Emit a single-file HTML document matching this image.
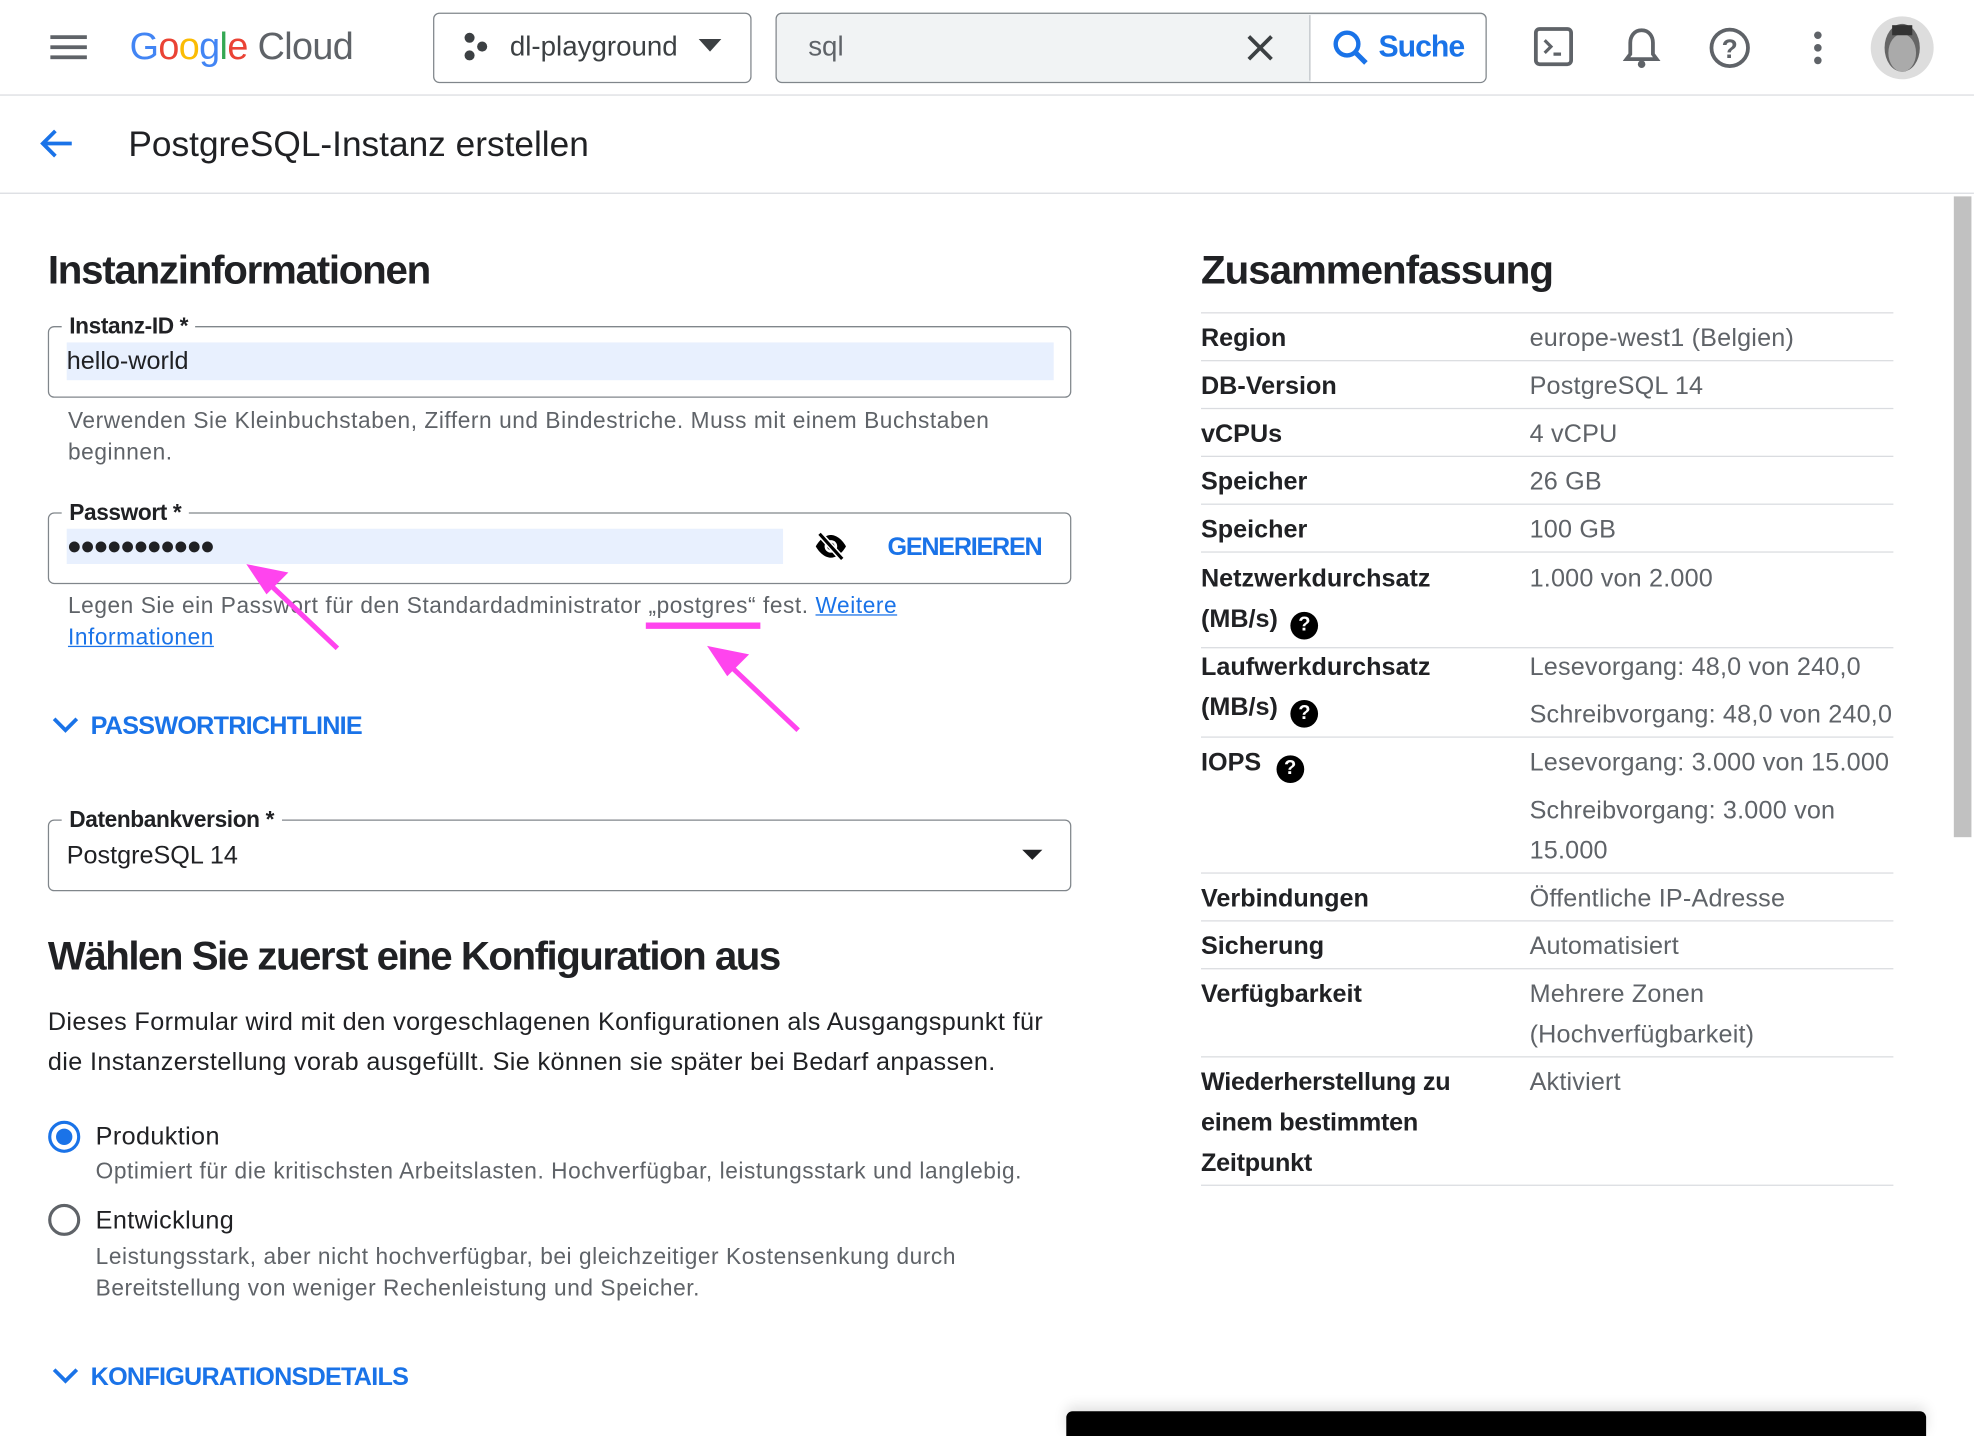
<!DOCTYPE html>
<html><head><meta charset="utf-8"><style>
*{margin:0;padding:0;box-sizing:border-box}
html,body{width:1974px;height:1428px;overflow:hidden;background:#fff}
#w{position:absolute;left:0;top:0;width:1568px;height:1134px;transform:scale(1.2589);transform-origin:0 0;font-family:"Liberation Sans",sans-serif;color:#202124}
.a{position:absolute;white-space:nowrap}
.box{position:absolute;border:1.5px solid #80868b;border-radius:5px}
.lbl{position:absolute;background:#fff;padding:0 6px;font-size:18px;font-weight:bold;left:10px;top:-13px;line-height:24px;letter-spacing:-0.3px}
.help{font-size:18px;color:#5f6368;letter-spacing:0.45px}
.blue{color:#1a73e8}
.l{font-size:20px;font-weight:bold;color:#202124}
.v{font-size:20px;color:#5f6368;letter-spacing:0.15px}
.hr{position:absolute;left:954px;width:550px;height:1px;background:#dadce0}
.q{display:inline-block;width:22px;height:22px;border-radius:50%;background:#000;color:#fff;font-size:16px;text-align:center;line-height:22px;font-weight:bold;vertical-align:-3px;margin-left:10px;letter-spacing:0}
</style></head><body><div id="w">
<!-- header -->
<div class="a" style="left:40px;top:28px;width:29px;height:3px;background:#5f6368;box-shadow:0 8px 0 #5f6368,0 16px 0 #5f6368"></div>
<div class="a" style="left:103px;top:21px;font-size:30px;letter-spacing:-0.5px"><span style="color:#4285f4">G</span><span style="color:#ea4335">o</span><span style="color:#fbbc04">o</span><span style="color:#4285f4">g</span><span style="color:#34a853">l</span><span style="color:#ea4335">e</span> <span style="color:#5f6368">Cloud</span></div>
<div class="box" style="left:344px;top:10px;width:253px;height:56px"></div>
<svg class="a" style="left:366px;top:25px" width="24" height="24"><circle cx="7" cy="5" r="4" fill="#3c4043"/><circle cx="17" cy="12" r="4" fill="#3c4043"/><circle cx="7" cy="19" r="4" fill="#3c4043"/></svg>
<div class="a" style="left:405px;top:24px;font-size:22px;color:#3c4043">dl-playground</div>
<svg class="a" style="left:554px;top:30px" width="20" height="12"><path d="M1 1h18L10 11z" fill="#3c4043"/></svg>
<div class="a" style="left:616px;top:10px;width:565px;height:56px;background:#f1f3f4;border:1.5px solid #80868b;border-radius:5px"></div>
<div class="a" style="left:1040px;top:12px;width:1px;height:52px;background:#bdc1c6"></div>
<div class="a" style="left:1041px;top:11.5px;width:139px;height:53px;background:#fff;border-radius:0 4px 4px 0"></div>
<div class="a" style="left:642px;top:24px;font-size:22px;color:#5f6368">sql</div>
<svg class="a" style="left:990px;top:27px" width="22" height="22"><path d="M2 2L20 20M20 2L2 20" stroke="#3c4043" stroke-width="3"/></svg>
<svg class="a" style="left:1058px;top:23px" width="30" height="30"><circle cx="12" cy="12" r="9" fill="none" stroke="#1a73e8" stroke-width="3.5"/><path d="M18 18L27 27" stroke="#1a73e8" stroke-width="4"/></svg>
<div class="a" style="left:1095px;top:24px;font-size:24px;font-weight:bold;color:#1a73e8;letter-spacing:-0.8px">Suche</div>
<svg class="a" style="left:1218px;top:21px" width="32" height="32"><rect x="2" y="2" width="28" height="28" rx="3" fill="none" stroke="#5f6368" stroke-width="3"/><path d="M9 11l5 5-5 5M16 22h6" stroke="#5f6368" stroke-width="2.5" fill="none"/></svg>
<svg class="a" style="left:1289px;top:20px" width="30" height="36"><path d="M15 4c-6 0-9 5-9 10v9l-3 4h24l-3-4v-9c0-5-3-10-9-10z" fill="none" stroke="#5f6368" stroke-width="3"/><circle cx="15" cy="31" r="3" fill="#5f6368"/></svg>
<svg class="a" style="left:1357px;top:21px" width="34" height="34"><circle cx="17" cy="17" r="14.5" fill="none" stroke="#5f6368" stroke-width="3"/><text x="17" y="25" font-size="21" font-weight="bold" fill="#5f6368" text-anchor="middle" font-family="Liberation Sans">?</text></svg>
<svg class="a" style="left:1438px;top:24px" width="12" height="28"><circle cx="6" cy="4" r="3" fill="#5f6368"/><circle cx="6" cy="14" r="3" fill="#5f6368"/><circle cx="6" cy="24" r="3" fill="#5f6368"/></svg>
<svg class="a" style="left:1485px;top:12px" width="52" height="52"><circle cx="26" cy="26" r="25" fill="#ddd"/><ellipse cx="26" cy="26" rx="14" ry="19" fill="#666"/><ellipse cx="26" cy="30" rx="11" ry="15" fill="#aaa"/><rect x="18" y="8" width="16" height="8" fill="#333"/></svg>
<div class="a" style="left:0;top:75px;width:1568px;height:1px;background:#dadce0"></div>
<svg class="a" style="left:30px;top:101px" width="30" height="26"><path d="M27 13H5M14 3L4 13l10 10" stroke="#1a73e8" stroke-width="3" fill="none"/></svg>
<div class="a" style="left:102px;top:99px;font-size:28px">PostgreSQL-Instanz erstellen</div>
<div class="a" style="left:0;top:153px;width:1568px;height:1px;background:#dadce0"></div>
<div class="a" style="left:1552px;top:156px;width:14px;height:509px;background:#c1c1c1"></div>
<!-- left -->
<div class="a" style="left:38px;top:196px;font-size:32px;font-weight:bold;letter-spacing:-1px">Instanzinformationen</div>
<div class="box" style="left:38px;top:259px;width:813px;height:57px"><div class="lbl">Instanz-ID *</div>
<div class="a" style="left:14px;top:12px;width:784px;height:30px;background:#e8f0fe"></div>
<div class="a" style="left:14px;top:16px;font-size:20px">hello-world</div></div>
<div class="a help" style="left:54px;top:322px;line-height:25px;white-space:normal;width:790px">Verwenden Sie Kleinbuchstaben, Ziffern und Bindestriche. Muss mit einem Buchstaben beginnen.</div>
<div class="box" style="left:38px;top:407px;width:813px;height:57px"><div class="lbl">Passwort *</div>
<div class="a" style="left:14px;top:12px;width:569px;height:28px;background:#e8f0fe"></div>
<div class="a" style="left:14px;top:15px;font-size:20px;letter-spacing:-1.5px">●●●●●●●●●●●</div>
<svg class="a" style="left:607px;top:14px" width="28" height="24"><path d="M2 12c4-7 9-9 12-9s8 2 12 9c-4 7-9 9-12 9s-8-2-12-9z" fill="#000"/><circle cx="14" cy="12" r="5" fill="#fff"/><circle cx="14" cy="12" r="3" fill="#000"/><path d="M5 2L23 22" stroke="#fff" stroke-width="5"/><path d="M5 2L23 22" stroke="#000" stroke-width="2.5"/></svg>
<div class="a blue" style="left:666px;top:16px;font-size:20px;font-weight:bold;letter-spacing:-1px">GENERIEREN</div></div>
<div class="a help" style="left:54px;top:469px;line-height:25px">Legen Sie ein Passwort für den Standardadministrator „postgres“ fest. <span class="blue" style="text-decoration:underline">Weitere</span></div>
<div class="a help blue" style="left:54px;top:494px;line-height:25px;color:#1a73e8;text-decoration:underline">Informationen</div>
<svg class="a" style="left:0;top:0" width="700" height="600"><g stroke="#ff44ee" stroke-width="4" fill="#ff44ee"><path d="M268 515L212 462"/><path d="M200 451l25 5-13 13z"/><path d="M513 497h91" stroke-width="5"/><path d="M634 580L578 527"/><path d="M566 516l25 5-13 13z"/></g></svg>
<svg class="a" style="left:41px;top:568px" width="22" height="16"><path d="M2 3l9 9 9-9" stroke="#1a73e8" stroke-width="3" fill="none"/></svg>
<div class="a blue" style="left:72px;top:566px;font-size:20px;font-weight:bold;letter-spacing:-0.6px">PASSWORTRICHTLINIE</div>
<div class="box" style="left:38px;top:651px;width:813px;height:57px"><div class="lbl">Datenbankversion *</div>
<div class="a" style="left:14px;top:17px;font-size:20px">PostgreSQL 14</div>
<svg class="a" style="left:772px;top:22px" width="18" height="10"><path d="M1 1h16L9 9z" fill="#202124"/></svg></div>
<div class="a" style="left:38px;top:741px;font-size:32px;font-weight:bold;letter-spacing:-1.2px">Wählen Sie zuerst eine Konfiguration aus</div>
<div class="a" style="left:38px;top:796px;font-size:20px;line-height:32px;letter-spacing:0.3px">Dieses Formular wird mit den vorgeschlagenen Konfigurationen als Ausgangspunkt für<br>die Instanzerstellung vorab ausgefüllt. Sie können sie später bei Bedarf anpassen.</div>
<svg class="a" style="left:37px;top:889px" width="28" height="28"><circle cx="14" cy="14" r="11.5" fill="none" stroke="#1a73e8" stroke-width="2.5"/><circle cx="14" cy="14" r="6.5" fill="#1a73e8"/></svg>
<div class="a" style="left:76px;top:892px;font-size:20px;letter-spacing:0.3px">Produktion</div>
<div class="a help" style="left:76px;top:920px">Optimiert für die kritischsten Arbeitslasten. Hochverfügbar, leistungsstark und langlebig.</div>
<svg class="a" style="left:37px;top:955px" width="28" height="28"><circle cx="14" cy="14" r="11.5" fill="none" stroke="#5f6368" stroke-width="2.5"/></svg>
<div class="a" style="left:76px;top:959px;font-size:20px;letter-spacing:0.3px">Entwicklung</div>
<div class="a help" style="left:76px;top:986px;line-height:25px">Leistungsstark, aber nicht hochverfügbar, bei gleichzeitiger Kostensenkung durch<br>Bereitstellung von weniger Rechenleistung und Speicher.</div>
<svg class="a" style="left:41px;top:1085px" width="22" height="16"><path d="M2 3l9 9 9-9" stroke="#1a73e8" stroke-width="3" fill="none"/></svg>
<div class="a blue" style="left:72px;top:1083px;font-size:20px;font-weight:bold;letter-spacing:-0.6px">KONFIGURATIONSDETAILS</div>
<div class="a" style="left:847px;top:1121px;width:683px;height:20px;background:#000;border-radius:5px 5px 0 0;box-shadow:0 -4px 10px rgba(0,0,0,.12)"></div>
<!-- right -->
<div class="a" style="left:954px;top:196px;font-size:32px;font-weight:bold;letter-spacing:-0.8px">Zusammenfassung</div>
<div class="hr" style="top:248px"></div>
<div class="a l" style="left:954px;top:258px">Region</div><div class="a v" style="left:1215px;top:258px">europe-west1 (Belgien)</div>
<div class="hr" style="top:286px"></div>
<div class="a l" style="left:954px;top:296px">DB-Version</div><div class="a v" style="left:1215px;top:296px">PostgreSQL 14</div>
<div class="hr" style="top:324px"></div>
<div class="a l" style="left:954px;top:334px">vCPUs</div><div class="a v" style="left:1215px;top:334px">4 vCPU</div>
<div class="hr" style="top:362px"></div>
<div class="a l" style="left:954px;top:372px">Speicher</div><div class="a v" style="left:1215px;top:372px">26 GB</div>
<div class="hr" style="top:400px"></div>
<div class="a l" style="left:954px;top:410px">Speicher</div><div class="a v" style="left:1215px;top:410px">100 GB</div>
<div class="hr" style="top:438px"></div>
<div class="a l" style="left:954px;top:444px;line-height:32px">Netzwerkdurchsatz<br>(MB/s)<span class="q">?</span></div><div class="a v" style="left:1215px;top:449px">1.000 von 2.000</div>
<div class="hr" style="top:514px"></div>
<div class="a l" style="left:954px;top:514px;line-height:32px">Laufwerkdurchsatz<br>(MB/s)<span class="q">?</span></div><div class="a v" style="left:1215px;top:511px;line-height:38px">Lesevorgang: 48,0 von 240,0<br>Schreibvorgang: 48,0 von 240,0</div>
<div class="hr" style="top:585px"></div>
<div class="a l" style="left:954px;top:595px">IOPS<span class="q" style="margin-left:12px">?</span></div><div class="a v" style="left:1215px;top:587px;line-height:38px">Lesevorgang: 3.000 von 15.000<br>Schreibvorgang: 3.000 von</div><div class="a v" style="left:1215px;top:665px">15.000</div>
<div class="hr" style="top:693px"></div>
<div class="a l" style="left:954px;top:703px">Verbindungen</div><div class="a v" style="left:1215px;top:703px">Öffentliche IP-Adresse</div>
<div class="hr" style="top:731px"></div>
<div class="a l" style="left:954px;top:741px">Sicherung</div><div class="a v" style="left:1215px;top:741px">Automatisiert</div>
<div class="hr" style="top:769px"></div>
<div class="a l" style="left:954px;top:779px">Verfügbarkeit</div><div class="a v" style="left:1215px;top:774px;line-height:32px">Mehrere Zonen<br>(Hochverfügbarkeit)</div>
<div class="hr" style="top:839px"></div>
<div class="a l" style="left:954px;top:844px;line-height:32px;letter-spacing:-0.2px">Wiederherstellung zu<br>einem bestimmten<br>Zeitpunkt</div><div class="a v" style="left:1215px;top:849px">Aktiviert</div>
<div class="hr" style="top:941px"></div>
</div></body></html>
